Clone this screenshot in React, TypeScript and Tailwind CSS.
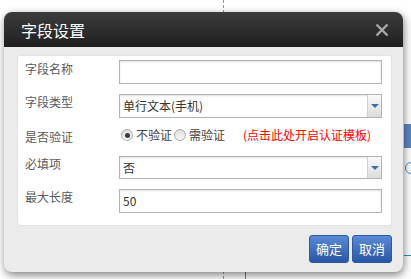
import React from "react";

const FONT = { fontFamily: '"Noto Sans CJK SC", "Noto Sans", sans-serif' };

function SelectBox({ value }: { value: string }) {
  return (
    <div className="flex h-full w-full items-stretch border border-[#b3b3b3] bg-white shadow-[inset_0_1px_2px_rgba(0,0,0,0.12)]">
      <span className="flex flex-1 items-center pl-[3px] text-[12px] text-[#333]">{value}</span>
      <span className="flex w-[14px] items-center justify-center border-l border-[#cfcfcf] bg-gradient-to-b from-[#fafafa] to-[#dcdcdc]">
        <span className="h-0 w-0 border-x-[4px] border-t-[4px] border-x-transparent border-t-[#3d6fa8]" />
      </span>
    </div>
  );
}

function TextBox({ value }: { value?: string }) {
  return (
    <div className="flex h-full w-full items-center border border-[#b3b3b3] bg-white pl-[3px] text-[12px] text-[#333] shadow-[inset_0_1px_2px_rgba(0,0,0,0.12)]">
      {value}
    </div>
  );
}

function Radio({ checked }: { checked?: boolean }) {
  return (
    <span className="flex h-[12px] w-[12px] items-center justify-center rounded-full border border-[#a9a9a9] bg-gradient-to-b from-[#dedede] to-[#f7f7f7]">
      {checked && <span className="h-[5px] w-[5px] rounded-full bg-[#3c3c3c]" />}
    </span>
  );
}

export default function App() {
  return (
    <div className="relative h-[279px] w-[411px] overflow-hidden bg-white" style={FONT}>
      {/* page behind the dialog */}
      <div className="absolute left-[223px] top-0 h-full border-l border-dashed border-[#d9843a]" />
      <div className="absolute left-[404px] top-[124px] h-[24px] w-[10px] bg-[#5b86c0]" />
      <div className="absolute left-[405px] top-[162px] h-[12px] w-[12px] rounded-full border border-[#3a8fd8]" />
      <div className="absolute left-[404px] top-[255px] h-px w-[10px] bg-[#2a90d8]" />
      <div className="absolute left-[245px] top-[268px] h-[11px] w-px bg-[#2a90d8]" />

      {/* dialog */}
      <div className="relative z-10 ml-[4px] mt-[12px] flex h-[260px] w-[399px] flex-col overflow-hidden rounded-[8px] bg-[#ebebeb] shadow-[1px_3px_8px_rgba(0,0,0,0.5)]">
        <div className="flex h-[35px] shrink-0 items-center justify-between bg-gradient-to-b from-[#3c3c3c] to-[#202020] pl-[17px] pr-[14px]">
          <span className="text-[16px] leading-none text-white">字段设置</span>
          <svg width="14" height="14" viewBox="0 0 14 14" aria-hidden>
            <path d="M1.5 1.5 L12.5 12.5 M12.5 1.5 L1.5 12.5" stroke="#a8a8a8" strokeWidth="2.4" />
          </svg>
        </div>

        <div className="ml-[13px] mr-[11px] mt-[8px] rounded-[3px] border border-[#e2e2e2] bg-white pb-[12px] pl-[7px] pr-[9px] pt-[4px] text-[12px]">
          <div className="flex h-[24px] items-start">
            <span className="w-[94px] pt-[1px] leading-4 text-[#5a5a5a]">字段名称</span>
            <div className="h-full flex-1"><TextBox /></div>
          </div>
          <div className="mt-[10px] flex h-[24px] items-start">
            <span className="w-[94px] leading-4 text-[#5a5a5a]">字段类型</span>
            <div className="h-full flex-1"><SelectBox value="单行文本(手机)" /></div>
          </div>
          <div className="mt-[5px] flex h-[24px] items-center">
            <span className="w-[94px] pt-[3px] leading-4 text-[#5a5a5a]">是否验证</span>
            <div className="flex items-center text-[#444]">
              <span className="ml-[2px]"><Radio checked /></span>
              <span className="ml-[3px]">不验证</span>
              <span className="ml-[2px]"><Radio /></span>
              <span className="ml-[3px]">需验证</span>
              <span className="ml-[18px] text-[#ff0000]">(点击此处开启认证模板)</span>
            </div>
          </div>
          <div className="mt-[9px] flex h-[23px] items-start">
            <span className="w-[94px] leading-4 text-[#5a5a5a]">必填项</span>
            <div className="h-full flex-1"><SelectBox value="否" /></div>
          </div>
          <div className="mt-[10px] flex h-[24px] items-start">
            <span className="w-[94px] leading-4 text-[#5a5a5a]">最大长度</span>
            <div className="h-full flex-1"><TextBox value="50" /></div>
          </div>
        </div>

        <div className="mr-[11px] mt-[9px] flex justify-end gap-[3px]">
          <button className="h-[28px] w-[40px] rounded-[3px] border border-[#2c5aa0] bg-gradient-to-b from-[#5a8ad6] to-[#2a57a4] text-[13px] text-white">确定</button>
          <button className="h-[28px] w-[40px] rounded-[3px] border border-[#2c5aa0] bg-gradient-to-b from-[#5a8ad6] to-[#2a57a4] text-[13px] text-white">取消</button>
        </div>
      </div>
    </div>
  );
}
